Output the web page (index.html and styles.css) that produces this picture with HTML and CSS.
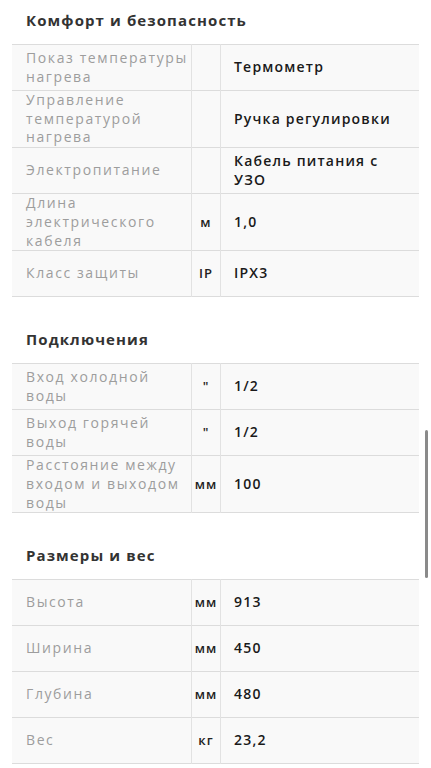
FILE: index.html
```html
<!DOCTYPE html>
<html lang="ru">
<head>
<meta charset="utf-8">
<link rel="stylesheet" href="styles.css">
</head>
<body>
<div class="page">
  <section class="group">
    <h2 class="title">Комфорт и безопасность</h2>
    <table class="specs">
      <tr><td class="label">Показ температуры нагрева</td><td class="unit"></td><td class="value">Термометр</td></tr>
      <tr><td class="label">Управление температурой нагрева</td><td class="unit"></td><td class="value">Ручка регулировки</td></tr>
      <tr><td class="label">Электропитание</td><td class="unit"></td><td class="value">Кабель питания с УЗО</td></tr>
      <tr><td class="label">Длина электрического кабеля</td><td class="unit">м</td><td class="value">1,0</td></tr>
      <tr><td class="label">Класс защиты</td><td class="unit">IP</td><td class="value">IPX3</td></tr>
    </table>
  </section>
  <section class="group">
    <h2 class="title">Подключения</h2>
    <table class="specs">
      <tr><td class="label">Вход холодной воды</td><td class="unit">"</td><td class="value">1/2</td></tr>
      <tr><td class="label">Выход горячей воды</td><td class="unit">"</td><td class="value">1/2</td></tr>
      <tr><td class="label">Расстояние между входом и выходом воды</td><td class="unit">мм</td><td class="value">100</td></tr>
    </table>
  </section>
  <section class="group">
    <h2 class="title">Размеры и вес</h2>
    <table class="specs">
      <tr><td class="label">Высота</td><td class="unit">мм</td><td class="value">913</td></tr>
      <tr><td class="label">Ширина</td><td class="unit">мм</td><td class="value">450</td></tr>
      <tr><td class="label">Глубина</td><td class="unit">мм</td><td class="value">480</td></tr>
      <tr><td class="label">Вес</td><td class="unit">кг</td><td class="value">23,2</td></tr>
    </table>
  </section>
</div>
<div class="scrollbar"></div>
</body>
</html>
```
FILE: styles.css
```css
html, body {
  margin: 0;
  padding: 0;
  background: #fff;
}
body {
  font-family: "Open Sans", "Noto Sans", sans-serif;
  overflow: hidden;
}
.page {
  padding: 10px 12px 0 12px;
  width: 407px;
}
.group {
  margin-bottom: 32px;
}
.title {
  margin: 0 0 14px 14px;
  font-size: 15px;
  line-height: 20px;
  font-weight: 700;
  color: #333;
  letter-spacing: 1.1px;
}
.specs {
  width: 407px;
  border-collapse: collapse;
  table-layout: fixed;
  border-top: 1px solid #dcdcdc;
}
.specs tr {
  background: #f9f9f9;
  border-bottom: 1px solid #dcdcdc;
}
.specs td {
  height: 45px;
  padding: 0;
  vertical-align: middle;
  font-size: 14px;
  line-height: 18.7px;
}
.specs td.label {
  width: 165px;
  padding-left: 14px;
  color: #9d9d9d;
  letter-spacing: 1.6px;
  border-right: 1px solid #e2e2e2;
}
.specs td.unit {
  width: 28px;
  text-align: center;
  color: #222;
  font-weight: 600;
  letter-spacing: 1px;
  font-size: 13px;
  border-right: 1px solid #e2e2e2;
}
.specs td.value {
  padding-left: 13px;
  padding-right: 24px;
  color: #1a1a1a;
  font-weight: 600;
  letter-spacing: 1.2px;
}
.scrollbar {
  position: fixed;
  right: 3px;
  top: 430px;
  width: 3px;
  height: 148px;
  border-radius: 2px;
  background: #8a8a8a;
}
```
